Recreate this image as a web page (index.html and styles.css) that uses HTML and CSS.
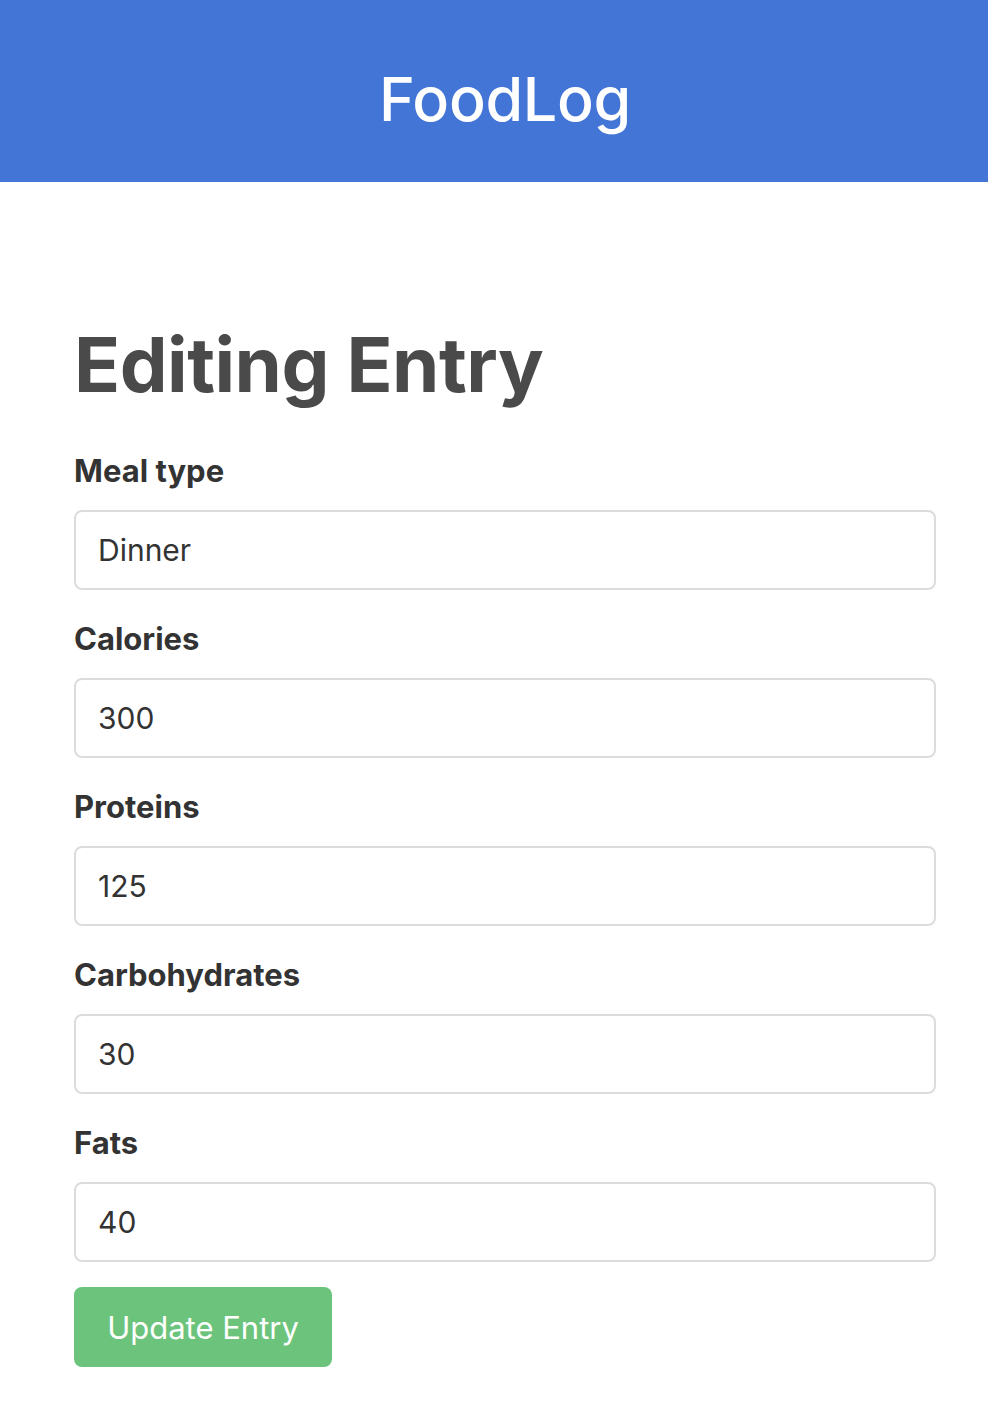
FILE: index.html
```html
<!DOCTYPE html>
<html>
<head>
<meta charset="utf-8">
<link rel="stylesheet" href="styles.css">
</head>
<body>
<header class="topbar">
  <div class="brand">FoodLog</div>
</header>
<main class="container">
  <h1 class="page-title">Editing Entry</h1>
  <form class="entry-form">
    <div class="field">
      <label class="field-label">Meal type</label>
      <input class="field-input" type="text" value="Dinner">
    </div>
    <div class="field">
      <label class="field-label">Calories</label>
      <input class="field-input" type="text" value="300">
    </div>
    <div class="field">
      <label class="field-label">Proteins</label>
      <input class="field-input" type="text" value="125">
    </div>
    <div class="field">
      <label class="field-label">Carbohydrates</label>
      <input class="field-input" type="text" value="30">
    </div>
    <div class="field">
      <label class="field-label">Fats</label>
      <input class="field-input" type="text" value="40">
    </div>
    <button class="submit-btn" type="button">Update Entry</button>
  </form>
</main>
</body>
</html>
```
FILE: styles.css
```css
* { box-sizing: border-box; }
body {
  margin: 0;
  font-family: Inter, "Noto Sans", sans-serif;
  background: #fff;
  color: #333;
}
.topbar {
  background: #4275d6;
  height: 182px;
  display: flex;
  align-items: center;
  justify-content: center;
  padding-left: 22px;
  padding-top: 16px;
}
.brand {
  color: #fff;
  font-size: 61px;
  font-weight: 500;
  letter-spacing: -0.3px;
}
.container {
  padding: 0 52px 0 74px;
}
.page-title {
  margin: 0;
  padding-top: 134px;
  font-size: 76px;
  font-weight: 700;
  color: #4a4a4a;
  line-height: 96px;
  letter-spacing: -0.5px;
}
.entry-form {
  display: flex;
  flex-direction: column;
  padding-top: 39px;
}
.field {
  display: flex;
  flex-direction: column;
  margin-bottom: 29px;
}
.field:last-of-type {
  margin-bottom: 25px;
}
.field-label {
  font-size: 31px;
  font-weight: 700;
  color: #333;
  line-height: 40px;
  margin-bottom: 19px;
}
.field-input {
  height: 80px;
  border: 2px solid #dcdcdc;
  border-radius: 8px;
  padding: 0 22px;
  font-family: Inter, "Noto Sans", sans-serif;
  font-size: 30px;
  color: #333;
  background: #fff;
}
.submit-btn {
  align-self: flex-start;
  width: 258px;
  height: 80px;
  background: #6cc47c;
  color: #fff;
  border: none;
  border-radius: 8px;
  font-family: Inter, "Noto Sans", sans-serif;
  font-size: 31px;
  font-weight: 400;
}
```
